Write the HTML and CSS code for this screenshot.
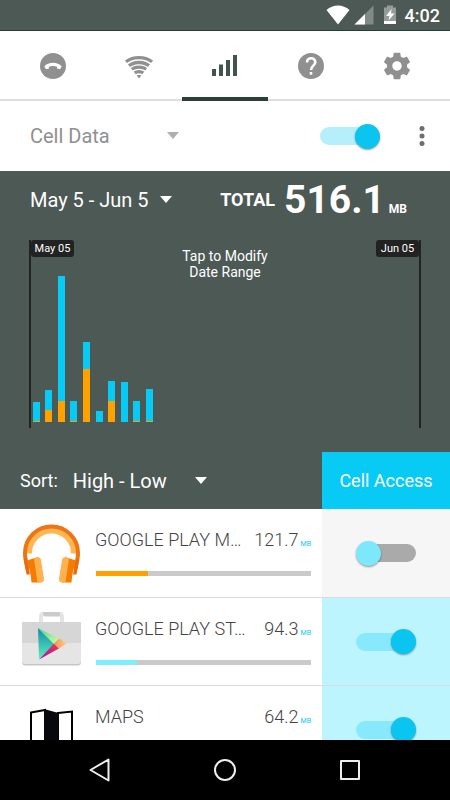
FILE: index.html
```html
<!DOCTYPE html>
<html lang="en">
<head>
  <meta charset="UTF-8">
  <meta name="viewport" content="width=device-width, initial-scale=1.0">
  <title>Data Usage</title>
  <link rel="stylesheet" href="styles.css">
</head>
<body>
  <!-- Status bar -->
  <div class="status-bar">
    <svg class="status-wifi" width="24" height="20" viewBox="0 0 24 20"><path d="M0.5 5C7 -1 17 -1 23.500 5L12 19.500z" fill="#fff"/></svg>
    <svg class="status-signal" width="20" height="20" viewBox="0 0 20 20">
      <path d="M0.500 19.500L19.500 0.500V19.500z" fill="#818a87"/>
      <path d="M0.500 19.500L11 9V19.500z" fill="#fff"/>
    </svg>
    <svg class="status-battery" width="14" height="20" viewBox="0 0 14 20">
      <path d="M4 0.500H10V2.500H13V17H1V2.500H4z" fill="#959d9a"/>
      <path d="M1 16H13V19H1z" fill="#fff"/>
      <path d="M8.500 4L3 11H6.500L5.500 15.500L11.500 8.500H8z" fill="#fff"/>
    </svg>
    <span class="clock">4:02</span>
  </div>

  <!-- Tabs -->
  <nav class="tabs">
    <a class="tab" href="#calls" aria-label="Calls">
      <svg width="28" height="28" viewBox="0 0 28 28">
        <circle cx="14" cy="14" r="13" fill="#909090"/>
        <path d="M5.300 14.500C9 9.500 19 9.500 22.700 14.500L21 17.300L18 16.500V14.800C15.500 13.800 12.500 13.800 10 14.800V16.500L7 17.300z" fill="#fff"/>
      </svg>
    </a>
    <a class="tab" href="#wifi" aria-label="Wi-Fi">
      <svg width="28" height="28" viewBox="0 0 28 28">
        <defs><clipPath id="wedge"><path d="M14 26.500L0 8.500V0H28V8.500z"/></clipPath></defs>
        <g clip-path="url(#wedge)" fill="none" stroke="#909090" stroke-width="3.300">
          <circle cx="14" cy="28" r="22.300"/>
          <circle cx="14" cy="28" r="17.500"/>
          <circle cx="14" cy="28" r="12.900"/>
          <circle cx="14" cy="28" r="8.300"/>
          <circle cx="14" cy="28" r="2.500" stroke-width="5"/>
        </g>
      </svg>
    </a>
    <a class="tab active" href="#cell" aria-label="Cell data">
      <svg width="28" height="28" viewBox="0 0 28 28" fill="#43534d">
        <path d="M1 17H5V24H1zM8 12.500H12V24H8zM15 8H19V24H15zM22 3H26V24H22z"/>
      </svg>
    </a>
    <a class="tab" href="#help" aria-label="Help">
      <svg width="28" height="28" viewBox="0 0 28 28">
        <circle cx="14" cy="14" r="13" fill="#909090"/>
        <path d="M10 10.500C10 4.800 18.300 4.800 18.300 10.300C18.300 13.600 14 13.800 14 18" fill="none" stroke="#fff" stroke-width="2.600"/>
        <path d="M12.700 20H15.300V22.700H12.700z" fill="#fff"/>
      </svg>
    </a>
    <a class="tab" href="#settings" aria-label="Settings">
      <svg width="32" height="32" viewBox="0 0 24 24">
        <path fill="#909090" d="M19.430 12.980c.04-.32.07-.64.07-.98s-.03-.66-.07-.98l2.110-1.650c.19-.15.24-.42.12-.64l-2-3.460c-.12-.22-.39-.3-.61-.22l-2.490 1c-.52-.4-1.080-.73-1.690-.98l-.38-2.650C14.460 2.180 14.250 2 14 2h-4c-.25 0-.46.18-.49.42l-.38 2.650c-.61.25-1.170.59-1.690.98l-2.490-1c-.23-.09-.49 0-.61.22l-2 3.460c-.13.22-.07.49.12.64l2.110 1.650c-.04.32-.07.65-.07.98s.03.66.07.98l-2.110 1.650c-.19.15-.24.42-.12.64l2 3.460c.12.22.39.3.61.22l2.490-1c.52.4 1.080.73 1.690.98l.38 2.650c.03.24.24.42.49.42h4c.25 0 .46-.18.49-.42l.38-2.650c.61-.25 1.170-.59 1.690-.98l2.490 1c.23.09.49 0 .61-.22l2-3.460c.12-.22.07-.49-.12-.64l-2.110-1.650zM12 15.500c-1.930 0-3.500-1.570-3.500-3.500s1.570-3.500 3.500-3.500 3.500 1.570 3.500 3.500-1.570 3.500-3.500 3.500z"/>
      </svg>
    </a>
  </nav>

  <!-- Data source -->
  <div class="source-row">
    <div class="dropdown source">
      <select aria-label="Data source">
        <option>Cell Data</option>
      </select>
    </div>
    <input type="checkbox" class="switch" aria-label="Cell data on" checked>
    <button class="more" aria-label="More options">
      <svg width="6" height="22" viewBox="0 0 6 22" fill="#6e6e6e"><circle cx="3" cy="3.500" r="2.500"/><circle cx="3" cy="11" r="2.500"/><circle cx="3" cy="18.500" r="2.500"/></svg>
    </button>
  </div>

  <!-- Usage summary and chart -->
  <section class="usage">
    <div class="usage-head">
      <div class="dropdown range">
        <select aria-label="Date range">
          <option>May 5 - Jun 5</option>
        </select>
      </div>
      <div class="total">
        <span class="total-label">TOTAL</span>
        <span class="total-value">516.1</span>
        <span class="total-unit">MB</span>
      </div>
    </div>

    <div class="chart">
      <div class="marker start"><span>May 05</span></div>
      <p class="hint">Tap to Modify<br>Date Range</p>
      <div class="marker end"><span>Jun 05</span></div>
      <div class="bars">
        <div class="bar"><i style="height: 19px"></i><b style="height: 1px"></b></div>
        <div class="bar"><i style="height: 20px"></i><b style="height: 12px"></b></div>
        <div class="bar"><i style="height: 125px"></i><b style="height: 21px"></b></div>
        <div class="bar"><i style="height: 20px"></i><b style="height: 1px"></b></div>
        <div class="bar"><i style="height: 27px"></i><b style="height: 53px"></b></div>
        <div class="bar"><i style="height: 11px"></i></div>
        <div class="bar"><i style="height: 20px"></i><b style="height: 21px"></b></div>
        <div class="bar"><i style="height: 40px"></i></div>
        <div class="bar"><i style="height: 20px"></i><b style="height: 1px"></b></div>
        <div class="bar"><i style="height: 32px"></i><b style="height: 1px"></b></div>
      </div>
    </div>

    <div class="sort-row">
      <label for="sort">Sort:</label>
      <div class="dropdown sort">
        <select id="sort">
          <option>High - Low</option>
        </select>
      </div>
      <div class="access-title">Cell Access</div>
    </div>
  </section>

  <!-- App list -->
  <ul class="app-list">
    <li class="app">
      <svg class="app-icon" width="60" height="60" viewBox="0 0 60 60">
        <path d="M7 30.500V30A22.500 22.500 0 0 1 52 30V30.500" fill="none" stroke="#ffb753" stroke-width="6"/>
        <path d="M5.500 46C4.500 41 3 36 3 30A26.500 26.500 0 0 1 56 30C56 36 54.500 41 53.500 46" fill="none" stroke="#ef7414" stroke-width="4"/>
        <path d="M2 36L5 35L8 51.500H4.500zM57 36L54 35L51 51.500H54.500z" fill="#e96c0c"/>
        <path d="M5 37.500L16 34L19 59.500H9.500C9 51 7 44 5 37.500z" fill="#f57c00"/>
        <path d="M12 35.500C17 33 18.500 34.500 19 37L22 56C22 58.500 21 59.500 18.500 59.500H15.500z" fill="#ffb14d"/>
        <path d="M54 37.500L43 34L40 59.500H49.500C50 51 52 44 54 37.500z" fill="#f57c00"/>
        <path d="M47 35.500C42 33 40.500 34.500 40 37L37 56C37 58.500 38 59.500 40.500 59.500H43.500z" fill="#ffb14d"/>
      </svg>
      <div class="app-info">
        <div class="app-line">
          <span class="app-name">GOOGLE PLAY M…</span>
          <span class="app-size">121.7</span>
          <span class="app-unit">MB</span>
        </div>
        <div class="meter"><div class="meter-fill orange" style="width: 24%"></div></div>
      </div>
      <div class="access">
        <input type="checkbox" class="switch" aria-label="Cell access for Google Play Music">
      </div>
    </li>
    <li class="app">
      <svg class="app-icon" width="60" height="60" viewBox="0 0 60 60">
        <defs>
          <linearGradient id="teal" x1="0" y1="0" x2="0" y2="1"><stop offset="0" stop-color="#168aa8"/><stop offset="1" stop-color="#5af0bd"/></linearGradient>
          <linearGradient id="lime" x1="0" y1="0" x2="1" y2="1"><stop offset="0" stop-color="#4ed391"/><stop offset="1" stop-color="#d8ffa0"/></linearGradient>
          <linearGradient id="pink" x1="0" y1="1" x2="1" y2="0"><stop offset="0" stop-color="#9a13b8"/><stop offset="1" stop-color="#ed3b45"/></linearGradient>
          <linearGradient id="peach"><stop offset="0" stop-color="#f58d68"/><stop offset="1" stop-color="#ffd06f"/></linearGradient>
        </defs>
        <path d="M19 11V5C19 3 20 1.500 22 1.500H37C39 1.500 40 3 40 5V11" fill="none" stroke="#e4e4e4" stroke-width="4"/>
        <path d="M21 0H38V4.500H24C21.500 4.500 21 2.500 21 0z" fill="#cbcbcb"/>
        <path d="M0 10H59V50C59 52.500 58 53.500 55.500 53.500H3.500C1 53.500 0 52.500 0 50z" fill="#c6c6c6"/>
        <path d="M0 10H59V49C59 51 58 52 55.500 52H3.500C1 52 0 51 0 49z" fill="#e5e5e5"/>
        <path d="M0 10H59V31H0z" fill="#d6d6d6"/>
        <path d="M16 16L32.500 32L17 47z" fill="url(#teal)"/>
        <path d="M16 16L37 26.500L32 32z" fill="url(#lime)"/>
        <path d="M17 47.500L32 31.500L37 36.500z" fill="url(#pink)"/>
        <path d="M37 26.500L44.500 31.500L37 36.500L32 31.500z" fill="url(#peach)"/>
      </svg>
      <div class="app-info">
        <div class="app-line">
          <span class="app-name">GOOGLE PLAY ST…</span>
          <span class="app-size">94.3</span>
          <span class="app-unit">MB</span>
        </div>
        <div class="meter"><div class="meter-fill" style="width: 19%"></div></div>
      </div>
      <div class="access allowed">
        <input type="checkbox" class="switch" aria-label="Cell access for Google Play Store" checked>
      </div>
    </li>
    <li class="app">
      <svg class="app-icon" width="60" height="60" viewBox="0 0 60 60">
        <path d="M9 12.500L23 10V48L9 52zM36 13L50 11.500V48L36 52z" fill="#fff" stroke="#000" stroke-width="2"/>
        <path d="M22 9L36.500 13V52L22 48z" fill="#07090c"/>
      </svg>
      <div class="app-info">
        <div class="app-line">
          <span class="app-name">MAPS</span>
          <span class="app-size">64.2</span>
          <span class="app-unit">MB</span>
        </div>
        <div class="meter"><div class="meter-fill" style="width: 12%"></div></div>
      </div>
      <div class="access allowed">
        <input type="checkbox" class="switch" aria-label="Cell access for Maps" checked>
      </div>
    </li>
  </ul>

  <!-- System navigation -->
  <div class="system-nav">
    <button aria-label="Back">
      <svg width="24" height="24" viewBox="0 0 24 24"><path d="M2.500 12L20.500 1.500V22.500z"/></svg>
    </button>
    <button aria-label="Home">
      <svg width="24" height="24" viewBox="0 0 24 24"><circle cx="12" cy="12" r="10"/></svg>
    </button>
    <button aria-label="Recent apps">
      <svg width="24" height="24" viewBox="0 0 24 24"><path d="M3 3H21V21H3z"/></svg>
    </button>
  </div>
</body>
</html>
```
FILE: styles.css
```css
* {
  box-sizing: border-box;
}

body {
  margin: 0;
  height: 100vh;
  display: flex;
  flex-direction: column;
  overflow: hidden;
  font-family: Roboto, Arial, sans-serif;
  background-color: #fff;
}

svg {
  display: block;
  flex: none;
}

button {
  border: none;
  padding: 0;
  background: none;
  cursor: pointer;
}

/* Status bar */
.status-bar {
  flex: none;
  display: flex;
  align-items: center;
  justify-content: flex-end;
  height: 31px;
  padding-right: 10px;
  background-color: #4d5954;
  border-bottom: 1px solid #1f4034;
  color: #fff;
}

.status-signal {
  margin-left: 4px;
}

.status-battery {
  margin: 0 8px 0 9px;
}

.clock {
  font-size: 18px;
  font-weight: 500;
}

/* Tabs */
.tabs {
  flex: none;
  display: flex;
  height: 70px;
  padding: 0 10px;
  box-shadow: inset 0 -2px #dedede;
}

.tab {
  flex: 1;
  display: flex;
  align-items: center;
  justify-content: center;
}

.tab.active {
  box-shadow: inset 0 -4px #2a3f38;
}

/* Drop-downs */
.dropdown {
  position: relative;
}

.dropdown select {
  width: 100%;
  appearance: none;
  border: none;
  padding: 0;
  background: none;
  color: inherit;
  font-family: inherit;
  font-size: 20px;
  line-height: 24px;
}

.dropdown::after {
  content: "";
  position: absolute;
  right: 0;
  top: 50%;
  margin-top: -4px;
  border: 6px solid transparent;
  border-top: 7px solid #fff;
  border-bottom: none;
  pointer-events: none;
}

.source {
  width: 149px;
  color: #909090;
}

.source::after {
  border-top-color: #b0b0b0;
}

.range {
  width: 142px;
}

.sort {
  width: 134px;
}

/* Switch */
.switch {
  appearance: none;
  display: grid;
  align-items: center;
  width: 60px;
  height: 26px;
  margin: 0;
  cursor: pointer;
}

.switch::before,
.switch::after {
  content: "";
  grid-area: 1 / 1;
}

.switch::before {
  justify-self: end;
  width: 56px;
  height: 18px;
  border-radius: 9px;
  background-color: #aaa;
}

.switch::after {
  width: 25px;
  height: 25px;
  border-radius: 50%;
  background-color: #7ee8fb;
  box-shadow: 0 1px 2px rgba(0, 0, 0, 0.4);
}

.switch:checked::before {
  justify-self: start;
  background-color: #b4effb;
}

.switch:checked::after {
  justify-self: end;
  background-color: #09c5f0;
}

.allowed .switch:checked::before {
  background-color: #88e9fd;
}

/* Data source row */
.source-row {
  flex: none;
  display: flex;
  align-items: center;
  height: 70px;
  padding: 0 20px 0 30px;
}

.source-row .switch {
  margin-left: auto;
}

.more {
  display: flex;
  justify-content: center;
  width: 16px;
  margin-left: 34px;
}

/* Usage */
.usage {
  flex: none;
  background-color: #4d5954;
  color: #fff;
}

.usage-head {
  display: flex;
  align-items: center;
  justify-content: space-between;
  height: 57px;
  padding: 0 43px 0 30px;
}

.total {
  display: flex;
  align-items: baseline;
  font-weight: 700;
}

.total-label {
  align-self: center;
  margin-right: 9px;
  font-size: 18px;
}

.total-value {
  margin-right: 4px;
  font-size: 39px;
}

.total-unit {
  font-size: 12px;
}

.chart {
  display: grid;
  height: 188px;
  margin: 12px 29px 24px;
}

.chart > * {
  grid-area: 1 / 1;
}

.marker {
  display: flex;
  align-items: flex-start;
  font-size: 11px;
}

.marker span {
  width: 43px;
  border-radius: 3px;
  background-color: #222;
  line-height: 17px;
  text-align: center;
}

.marker.start {
  justify-self: start;
  border-left: 2px solid #222;
}

.marker.end {
  justify-self: end;
  border-right: 2px solid #222;
}

.hint {
  margin: 8px 0 0;
  font-size: 14px;
  line-height: 16px;
  text-align: center;
}

.bars {
  align-self: end;
  display: grid;
  grid-template-columns: repeat(31, 1fr);
  align-items: end;
  justify-items: center;
  padding: 0 2px 6px 1px;
}

.bar i,
.bar b {
  display: block;
  width: 7px;
  background-color: #07cbf4;
}

.bar b {
  background-color: #ffa200;
}

.sort-row {
  display: flex;
  align-items: center;
  height: 57px;
  padding-left: 20px;
}

.sort-row label {
  margin-right: 15px;
  font-size: 18px;
}

.access-title {
  display: flex;
  align-items: center;
  justify-content: center;
  align-self: stretch;
  width: 128px;
  margin-left: auto;
  background-color: #07cbf4;
  font-size: 18px;
}

/* App list */
.app-list {
  flex: 1;
  min-height: 0;
  margin: 0;
  padding: 0;
  overflow: hidden;
  list-style: none;
}

.app {
  display: flex;
  height: 88px;
}

.app + .app {
  border-top: 1px solid #dcdcdc;
}

.app-icon {
  margin: 14px 13px 0 22px;
}

.app-info {
  flex: 1;
  min-width: 0;
  padding: 20px 11px 0 0;
}

.app-line {
  display: flex;
  align-items: baseline;
  line-height: 22px;
  color: #444;
}

.app-name {
  flex: 1;
  white-space: nowrap;
  font-size: 18px;
  font-weight: 300;
}

.app-size {
  font-size: 18px;
  font-weight: 300;
}

.app-unit {
  margin-left: 2px;
  font-size: 7px;
  color: #07cbf4;
}

.meter {
  height: 5px;
  margin: 16px 0 0 1px;
  background-color: #cacaca;
}

.meter-fill {
  height: 100%;
  background-color: #7eeeff;
}

.meter-fill.orange {
  background-color: #ffa200;
}

.access {
  display: flex;
  align-items: center;
  justify-content: center;
  width: 128px;
  background-color: #f6f6f6;
}

.access.allowed {
  background-color: #bdf5ff;
}

/* System navigation */
.system-nav {
  flex: none;
  display: flex;
  justify-content: center;
  height: 60px;
  background-color: #000;
}

.system-nav button {
  display: flex;
  align-items: center;
  justify-content: center;
  width: 125px;
}

.system-nav svg {
  fill: none;
  stroke: #eee;
  stroke-width: 2;
  stroke-linejoin: round;
}
```
